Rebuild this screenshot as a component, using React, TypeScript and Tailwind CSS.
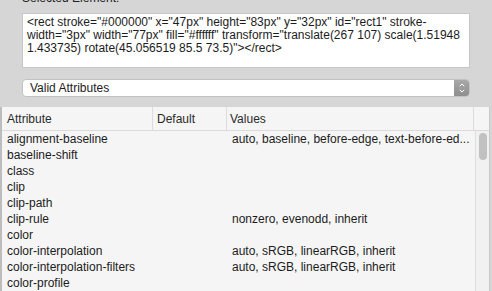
import { ChevronDown, ChevronUp } from "lucide-react"

const rows: [string, string, string][] = [
  ["alignment-baseline", "", "auto, baseline, before-edge, text-before-ed..."],
  ["baseline-shift", "", ""],
  ["class", "", ""],
  ["clip", "", ""],
  ["clip-path", "", ""],
  ["clip-rule", "", "nonzero, evenodd, inherit"],
  ["color", "", ""],
  ["color-interpolation", "", "auto, sRGB, linearRGB, inherit"],
  ["color-interpolation-filters", "", "auto, sRGB, linearRGB, inherit"],
  ["color-profile", "", ""],
]

export default function App() {
  return (
    <div className="w-[492px] h-[291px] overflow-hidden bg-[#d6d6d6] text-[12px] text-[#1c1c1c] font-['Liberation_Sans',Arial,sans-serif]">
      <div className="px-[22px]">
        <div className="-mt-[9px] h-[14px] leading-[14px] text-[#222]">Selected Element:</div>
        <div className="mt-[8px] h-[55px] bg-white border border-[#c6c6c6] px-[4px] pt-[2px] leading-[13px] whitespace-nowrap">
          <div>&lt;rect stroke="#000000" x="47px" height="83px" y="32px" id="rect1" stroke-</div>
          <div>width="3px" width="77px" fill="#ffffff" transform="translate(267 107) scale(1.51948</div>
          <div>1.433735) rotate(45.056519 85.5 73.5)"&gt;&lt;/rect&gt;</div>
        </div>
        <div className="mt-[11px] h-[18px] flex bg-white rounded-[4px] border border-[#c2c2c2] overflow-hidden">
          <div className="flex-1 pl-[7px] leading-[16px]">Valid Attributes</div>
          <div className="w-[15px] flex flex-col items-center justify-center bg-gradient-to-b from-[#a8a8a8] to-[#8e8e8e] text-white">
            <ChevronUp size={8} strokeWidth={3} className="-mb-[1px]" />
            <ChevronDown size={8} strokeWidth={3} className="-mt-[1px]" />
          </div>
        </div>
      </div>

      <div className="mt-[10px] w-[490px] h-[200px] flex flex-col bg-[#f5f5f5] border-l-2 border-l-[#bdbdbd] border-r border-r-[#c9c9c9]">
        <div className="h-[24px] flex border-b border-[#dadada] text-[#2a2a2a]">
          <div className="w-[151px] pl-[5px] flex items-center border-r border-[#dcdcdc]">Attribute</div>
          <div className="w-[74px] pl-[4px] flex items-center border-r border-[#dcdcdc]">Default</div>
          <div className="w-[247px] pl-[3px] flex items-center border-r border-[#dcdcdc]">Values</div>
          <div className="flex-1" />
        </div>
        <div className="flex flex-1">
          <div className="w-[473px]">
            {rows.map(([name, def, values]) => (
              <div key={name} className="h-[16px] flex items-center leading-[16px] whitespace-nowrap">
                <div className="w-[151px] pl-[5px]">{name}</div>
                <div className="w-[75px] pl-[4px]">{def}</div>
                <div className="w-[247px] pl-[4px]">{values}</div>
              </div>
            ))}
          </div>
          <div className="flex-1 bg-[#f1f1f1] border-l border-[#dedede] pt-[2px] flex justify-center">
            <div className="w-[8px] h-[27px] rounded-full bg-[#c1c1c1]" />
          </div>
        </div>
      </div>
    </div>
  )
}
